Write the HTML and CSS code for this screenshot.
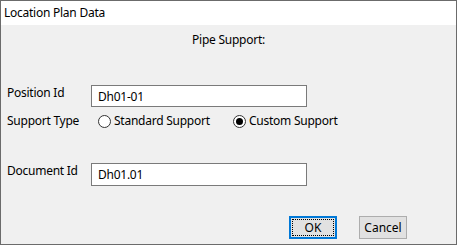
FILE: index.html
```html
<!DOCTYPE html>
<html lang="en">
<head>
    <meta charset="UTF-8">
    <meta name="viewport" content="width=device-width, initial-scale=1.0">
    <title>Location Plan Data</title>
    <link rel="stylesheet" href="styles.css">
</head>
<body>
    <div class="dialog">
        <div class="title-bar">Location Plan Data</div>

        <div class="dialog-body">
            <div class="heading">Pipe Support:</div>

            <div class="row row-position">
                <label class="row-label" for="position-id">Position Id</label>
                <input type="text" class="text-field" id="position-id" value="Dh01-01">
            </div>

            <div class="row row-type">
                <span class="row-label">Support Type</span>
                <div class="radio-group">
                    <span class="radio-option radio-standard">
                        <span class="radio-circle"></span>
                        <span class="radio-text">Standard Support</span>
                    </span>
                    <span class="radio-option">
                        <span class="radio-circle checked"></span>
                        <span class="radio-text">Custom Support</span>
                    </span>
                </div>
            </div>

            <div class="row row-document">
                <label class="row-label" for="document-id">Document Id</label>
                <input type="text" class="text-field" id="document-id" value="Dh01.01">
            </div>

            <div class="buttons">
                <button class="btn btn-default"><span class="btn-focus">OK</span></button>
                <button class="btn">Cancel</button>
            </div>
        </div>
    </div>
</body>
</html>
```

FILE: styles.css
```css
* {
    margin: 0;
    padding: 0;
    box-sizing: border-box;
    font-family: 'Noto Sans', 'Open Sans', sans-serif;
}

body {
    width: 457px;
    height: 245px;
    overflow: hidden;
    background: #f0f0f0;
}

.dialog {
    width: 457px;
    height: 245px;
    border: 1px solid #6b6b6b;
    background: #f0f0f0;
    font-size: 12px;
    letter-spacing: -0.25px;
    color: #000;
}

.title-bar {
    height: 24px;
    line-height: 16px;
    padding: 4px 0 0 3px;
    background: #fff;
}

.dialog-body {
    padding-left: 6px;
}

.heading {
    margin-top: 7px;
    line-height: 16px;
    text-align: center;
    padding-right: 6px;
}

.row {
    display: flex;
    align-items: flex-start;
}

.row-label {
    width: 84px;
    line-height: 16px;
    flex-shrink: 0;
}

.row-position {
    margin-top: 37px;
}

.row-type {
    margin-top: 6px;
}

.row-document {
    margin-top: 34px;
}

.text-field {
    width: 216px;
    height: 22px;
    border: 1px solid #7a7a7a;
    background: #fff;
    padding: 0 6px;
    font-size: 12px;
    letter-spacing: -0.25px;
    color: #000;
    outline: none;
}

.row-document .text-field {
    height: 23px;
}

.radio-group {
    display: flex;
    padding-left: 7px;
}

.radio-option {
    display: flex;
    align-items: center;
    line-height: 16px;
}

.radio-standard {
    width: 135px;
}

.radio-circle {
    width: 13px;
    height: 13px;
    border: 1px solid #333;
    border-radius: 50%;
    background: #fff;
    margin-right: 3px;
    display: flex;
    align-items: center;
    justify-content: center;
}

.radio-circle.checked::after {
    content: '';
    width: 7px;
    height: 7px;
    border-radius: 50%;
    background: #000;
}

.buttons {
    display: flex;
    justify-content: flex-end;
    gap: 22px;
    margin-top: 30px;
    padding-right: 49px;
}

.btn {
    width: 48px;
    height: 23px;
    border: 1px solid #adadad;
    background: #e1e1e1;
    font-size: 12px;
    color: #000;
    display: flex;
    align-items: center;
    justify-content: center;
}

.btn-default {
    border: 2px solid #0078d7;
    padding: 1px;
}

.btn-focus {
    width: 100%;
    height: 100%;
    border: 1px dotted #000;
    display: flex;
    align-items: center;
    justify-content: center;
}
```
